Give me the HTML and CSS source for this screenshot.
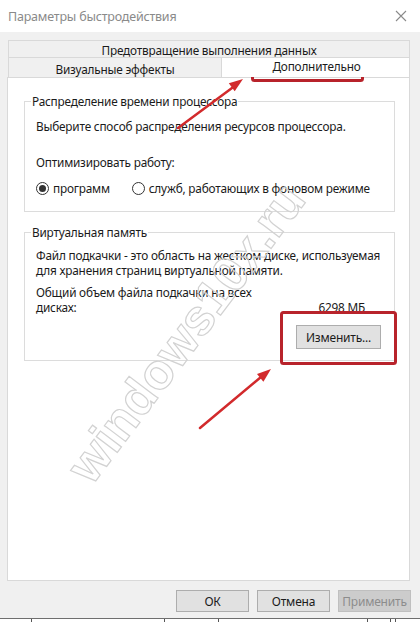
FILE: index.html
```html
<!DOCTYPE html>
<html lang="ru">
<head>
<meta charset="utf-8">
<title>Параметры быстродействия</title>
<link rel="stylesheet" href="styles.css">
</head>
<body>
<div class="window">
  <div class="titlebar">
    <span class="title">Параметры быстродействия</span>
    <svg class="close" width="12" height="12" viewBox="0 0 12 12"><path d="M1 1 L11 11 M11 1 L1 11" stroke="#8a8a8a" stroke-width="1.1" fill="none"/></svg>
  </div>
  <div class="body">
    <div class="tabs">
      <div class="tabrow">
        <div class="tab full">Предотвращение выполнения данных</div>
      </div>
      <div class="tabrow">
        <div class="tab left">Визуальные эффекты</div>
        <div class="tab active">Дополнительно</div>
      </div>
    </div>
    <div class="panel">
      <fieldset class="group cpu">
        <legend>Распределение времени процессора</legend>
        <p class="line first">Выберите способ распределения ресурсов процессора.</p>
        <p class="line second">Оптимизировать работу:</p>
        <div class="radios">
          <label class="radio"><span class="circle checked"></span>программ</label>
          <label class="radio"><span class="circle"></span>служб, работающих в фоновом режиме</label>
        </div>
      </fieldset>
      <fieldset class="group vm">
        <legend>Виртуальная память</legend>
        <p class="para">Файл подкачки - это область на жестком диске, используемая для хранения страниц виртуальной памяти.</p>
        <div class="total">
          <span class="total-label">Общий объем файла подкачки на всех дисках:</span>
          <span class="total-value">6298 МБ</span>
        </div>
        <div class="change-row"><button class="btn change">Изменить...</button></div>
      </fieldset>
    </div>
    <div class="buttons">
      <button class="btn">ОК</button>
      <button class="btn">Отмена</button>
      <button class="btn disabled">Применить</button>
    </div>
  </div>
  <div class="behind">
    <span class="tick t1"></span><span class="tick t2"></span><span class="tick t3"></span><span class="tick t4"></span><span class="tick t5"></span><span class="tick t6"></span>
  </div>
</div>
<svg class="overlay" width="420" height="622" viewBox="0 0 420 622">
  <text class="watermark" x="186" y="333" text-anchor="middle" dominant-baseline="central" transform="rotate(-53 186 333)">windows10x.ru</text>
  <rect x="252.5" y="59.5" width="110" height="21" rx="2" fill="none" stroke="#b8232b" stroke-width="3"/>
  <rect x="281.5" y="312.5" width="114" height="51" rx="2" fill="none" stroke="#b8232b" stroke-width="3"/>
  <line x1="178" y1="128" x2="232" y2="88" stroke="#d22a2c" stroke-width="2.5" stroke-linecap="round"/>
  <polygon points="243,79 234.7,91.3 228.8,83.3" fill="#d22a2c"/>
  <line x1="200" y1="428" x2="261" y2="377" stroke="#d22a2c" stroke-width="2.5" stroke-linecap="round"/>
  <polygon points="271,369 263.4,381.8 257,374.1" fill="#d22a2c"/>
</svg>
</body>
</html>
```

FILE: styles.css
```css
* { box-sizing: border-box; }
html, body { margin: 0; padding: 0; }
body {
  width: 420px;
  height: 622px;
  overflow: hidden;
  background: #ffffff;
  font-family: "Noto Sans", "Open Sans", sans-serif;
  font-size: 11.8px;
  letter-spacing: -0.2px;
  color: #1b1b1b;
  position: relative;
}
.window {
  width: 420px;
  height: 622px;
  background: #f0f0f0;
  display: flex;
  flex-direction: column;
}
.titlebar {
  height: 32px;
  background: #ffffff;
  display: flex;
  align-items: center;
  justify-content: space-between;
  padding: 0 13px 0 8px;
  flex-shrink: 0;
}
.title { color: #8a8a8a; font-size: 12.5px; }
.close { display: block; }
.body {
  padding: 8px 10px 0 7px;
  flex: 1;
  display: flex;
  flex-direction: column;
}
.tabs { display: flex; flex-direction: column; padding-left: 1px; }
.tabrow { display: flex; }
.tab {
  border: 1px solid #d9d9d9;
  background: #f0f0f0;
  text-align: center;
  line-height: 16px;
}
.tab.full { flex: 1; height: 17px; border-bottom: none; padding-top: 1px; }
.tab.left { width: 214px; height: 20px; padding-top: 3px; border-bottom: none; }
.tab.active {
  flex: 1;
  height: 20px;
  background: #ffffff;
  border-left: none;
  border-bottom: none;
  padding-top: 0;
  padding-left: 2px;
  margin-bottom: -1px;
  position: relative;
  z-index: 1;
}
.panel {
  background: #ffffff;
  border: 1px solid #d9d9d9;
  height: 504px;
  padding: 15px 14px 0 16px;
  display: flex;
  flex-direction: column;
}
.group {
  margin: 0;
  border: 1px solid #dcdcdc;
  padding: 0 0 0 6px;
  min-width: 0;
}
.group legend {
  padding: 0 1px;
  line-height: 16px;
}
.line { margin: 0 0 0 5px; line-height: 16px; }
.line.first { margin-top: 9px; }
.line.second { margin-top: 20px; }
.radios {
  display: flex;
  margin: 10px 0 0 5px;
  line-height: 16px;
  gap: 22px;
}
.radio { display: flex; align-items: center; gap: 4px; }
.circle {
  width: 13px;
  height: 13px;
  border: 1px solid #333333;
  border-radius: 50%;
  display: flex;
  align-items: center;
  justify-content: center;
  background: #fff;
}
.circle.checked::after {
  content: "";
  width: 7px;
  height: 7px;
  border-radius: 50%;
  background: #333333;
}
.cpu { padding-bottom: 15px; }
.vm { margin-top: 12px; padding-bottom: 11px; padding-right: 13px; }
.para { margin: 8px 0 0 5px; line-height: 15px; }
.total {
  display: flex;
  justify-content: space-between;
  align-items: flex-end;
  margin: 7px 16px 0 5px;
  line-height: 15px;
}
.total-label { width: 230px; }
.change-row { display: flex; justify-content: flex-end; margin-top: 10px; }
.btn {
  font-family: inherit;
  font-size: 12px;
  letter-spacing: -0.2px;
  color: #1b1b1b;
  background: #e1e1e1;
  border: 1px solid #adadad;
  width: 73px;
  height: 22px;
  padding: 0;
  margin: 0;
}
.btn.change { width: 85px; height: 24px; }
.btn.disabled { background: #cccccc; border-color: #bfbfbf; color: #8c8c8c; }
.buttons {
  display: flex;
  justify-content: flex-end;
  gap: 8px;
  margin-top: 9px;
  margin-right: -1px;
}
.behind {
  margin-top: 6px;
  flex: 1;
  border-top: 1px solid #6e6e6e;
  background: #ffffff;
  position: relative;
  display: flex;
}
.tick { display: block; width: 1px; height: 100%; background: #555; }
.t1 { margin-left: 31px; }
.t2 { margin-left: 132px; }
.t3 { margin-left: 53px; }
.t4 { margin-left: 148px; }
.t5 { margin-left: 22px; }
.t6 { margin-left: 4px; }
.overlay {
  position: absolute;
  left: 0;
  top: 0;
  pointer-events: none;
}
.watermark {
  font-family: "Liberation Sans", Arial, sans-serif;
  font-size: 50px;
  font-weight: bold;
  letter-spacing: 0;
  fill: none;
  stroke: #d2d2d2;
  stroke-width: 1.2px;
}
```
